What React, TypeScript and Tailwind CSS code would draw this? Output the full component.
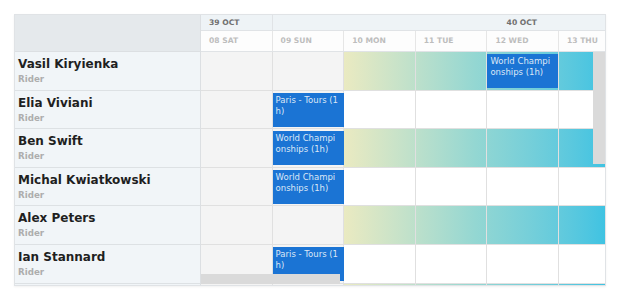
const COL = 71.6;

const days = ['08 SAT', '09 SUN', '10 MON', '11 TUE', '12 WED', '13 THU'];

type Evt = { col: number; title: string };
type Row = { name: string; role: string; band?: number; events: Evt[] };

const rows: Row[] = [
  { name: 'Vasil Kiryienka', role: 'Rider', band: 2, events: [{ col: 4, title: 'World Championships (1h)' }] },
  { name: 'Elia Viviani', role: 'Rider', events: [{ col: 1, title: 'Paris - Tours (1h)' }] },
  { name: 'Ben Swift', role: 'Rider', band: 2, events: [{ col: 1, title: 'World Championships (1h)' }] },
  { name: 'Michal Kwiatkowski', role: 'Rider', events: [{ col: 1, title: 'World Championships (1h)' }] },
  { name: 'Alex Peters', role: 'Rider', band: 2, events: [] },
  { name: 'Ian Stannard', role: 'Rider', events: [{ col: 1, title: 'Paris - Tours (1h)' }] },
];

// next row, only its top edge shows under the fold
const nextRow: Row = { name: '', role: '', band: 2, events: [] };

const isWeekend = (i: number) => days[i].endsWith('SAT') || days[i].endsWith('SUN');

function TimelineRow({ row }: { row: Row }) {
  return (
    <div className="relative flex h-[38.6px] shrink-0 border-b border-[#e0e0e0] bg-white">
      {row.band !== undefined && (
        <div
          className="absolute top-0 bottom-0 bg-gradient-to-r from-[#eaeac1] via-[#94d7d2] to-[#3fc3e2]"
          style={{ left: row.band * COL, width: 261 }}
        />
      )}
      {days.map((d, i) => (
        <div
          key={d}
          className={
            'relative h-full shrink-0 border-r border-[#e0e0e0] ' +
            (isWeekend(i) ? 'bg-[#f4f4f4]' : row.band !== undefined && i >= row.band ? 'bg-transparent' : 'bg-white')
          }
          style={{ width: COL }}
        />
      ))}
      {row.events.map((e) => (
        <div
          key={e.col}
          className="absolute top-[2px] bottom-[1.5px] z-10 w-[71px] bg-[#1b74d4] pl-[3px] pr-[3.5px] pt-[2px] text-[8.5px] leading-[11px] text-[#dbe7f6] break-all"
          style={{ left: e.col * COL }}
        >
          {e.title}
        </div>
      ))}
    </div>
  );
}

export default function App() {
  return (
    <div className="h-[300px] w-[620px] bg-white pl-[14px] pt-[14px] font-['DejaVu_Sans',sans-serif]">
      <div className="flex h-[272px] w-[592px] overflow-hidden border border-[#e0e3e6] shadow-[0_1px_2px_rgba(0,0,0,0.06)]">
        {/* locked column */}
        <div className="flex w-[186px] shrink-0 flex-col border-r border-[#dcdfe2] bg-[#f1f5f8]">
          <div className="h-[37px] shrink-0 border-b border-[#dcdfe2] bg-[#e5e9ec]" />
          {rows.map((r) => (
            <div key={r.name} className="h-[38.6px] shrink-0 border-b border-[#dde1e4] pl-[3px] pt-[3px]">
              <div className="text-[12px] font-bold leading-[18px] text-[#1f1f1f]">{r.name}</div>
              <div className="text-[8.7px] font-bold leading-[12px] text-[#adadad]">{r.role}</div>
            </div>
          ))}
        </div>

        {/* timeline */}
        <div className="relative flex min-w-0 flex-1 flex-col overflow-hidden">
          <div className="flex h-[16px] shrink-0 border-b border-[#e0e3e6] bg-[#eef3f6] text-[7.6px] font-bold leading-[15px] text-[#707070]">
            <div className="shrink-0 border-r border-[#e0e3e6] pl-[8px]" style={{ width: COL }}>
              39 OCT
            </div>
            <div className="flex-1 pl-[234px]">40 OCT</div>
          </div>
          <div className="flex h-[21px] shrink-0 border-b border-[#e0e3e6] bg-[#fdfdfd] text-[7.6px] font-bold leading-[20px] text-[#bdbdbd]">
            {days.map((d) => (
              <div key={d} className="shrink-0 border-r border-[#e6e6e6] pl-[8px]" style={{ width: COL }}>
                {d}
              </div>
            ))}
          </div>
          {rows.map((r) => (
            <TimelineRow key={r.name} row={r} />
          ))}
          <TimelineRow row={nextRow} />

          {/* scroll thumbs */}
          <div className="absolute right-0 top-[37px] z-20 h-[112px] w-[12px] bg-[#dadada]" />
          <div className="absolute left-0 top-[259px] z-20 h-[10px] w-[139px] bg-[#dadada]" />
        </div>
      </div>
    </div>
  );
}
